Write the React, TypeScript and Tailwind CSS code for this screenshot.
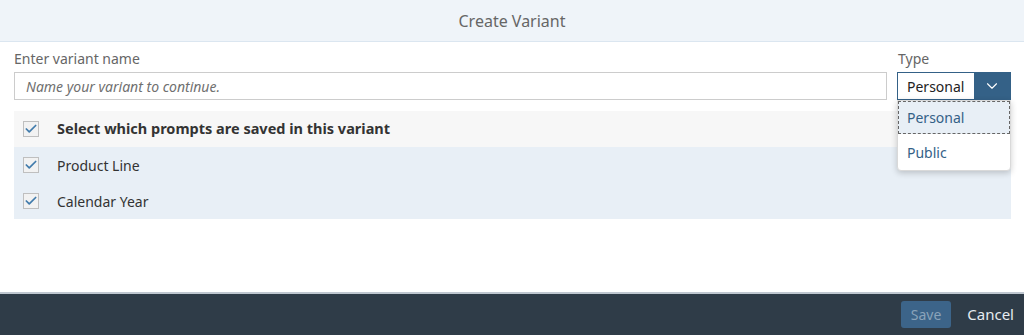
import { ChevronDown, Check } from "lucide-react";

function Box() {
  return (
    <span className="flex h-4 w-4 items-center justify-center border border-[#bfbfbf] bg-[#f2f2f2]">
      <Check size={14} strokeWidth={3} className="text-[#427cac]" />
    </span>
  );
}

function Row({ label, bold, head }: { label: string; bold?: boolean; head?: boolean }) {
  return (
    <div
      className={`flex h-9 items-center gap-[18px] pl-[9px] ${
        head ? "bg-[#f7f7f7]" : "bg-[#e8eff6]"
      }`}
    >
      <Box />
      <span className={`text-[#333] ${bold ? "text-[14.5px] font-bold" : "text-[14px]"}`}>{label}</span>
    </div>
  );
}

export default function App() {
  return (
    <div
      className="flex h-[335px] w-[1024px] flex-col overflow-hidden bg-white"
      style={{ fontFamily: '"Noto Sans", "Open Sans", sans-serif' }}
    >
      {/* Header */}
      <div className="flex h-[42px] shrink-0 items-center justify-center border-b border-[#dbe6f0] bg-[#eff4f9]">
        <span className="text-[16px] text-[#666]">Create Variant</span>
      </div>

      {/* Body */}
      <div className="flex-1 pl-[14px] pr-[13px] pt-[8px]">
        <div className="flex gap-[10px]">
          <div className="flex flex-1 flex-col">
            <label className="mb-[5px] text-[14px] leading-[17px] text-[#666]">Enter variant name</label>
            <div className="flex h-[28px] items-center border border-[#cccccc] px-[11px]">
              <span className="text-[14px] italic text-[#707070]">Name your variant to continue.</span>
            </div>
          </div>
          <div className="relative flex w-[114px] flex-col">
            <label className="mb-[5px] pl-px text-[14px] leading-[17px] text-[#666]">Type</label>
            <div className="flex h-[28px] border border-[#346187]">
              <span className="flex flex-1 items-center bg-white pl-[9px] text-[14px] text-[#222]">Personal</span>
              <span className="flex w-[36px] items-center justify-center bg-[#346187]">
                <ChevronDown size={18} strokeWidth={1.5} className="text-white" />
              </span>
            </div>
            <div className="absolute left-0 right-0 top-[50px] z-10 rounded-b-[4px] border border-[#d9d9d9] bg-white shadow-[0_2px_6px_rgba(0,0,0,0.2)]">
              <div className="flex h-[33px] items-center border border-dashed border-[#666] bg-[#e8eff6] pl-[8px] text-[14px] text-[#346187]">
                Personal
              </div>
              <div className="flex h-[36px] items-center pl-[9px] text-[14px] text-[#346187]">Public</div>
            </div>
          </div>
        </div>

        <div className="mt-[11px] flex flex-col">
          <Row label="Select which prompts are saved in this variant" bold head />
          <Row label="Product Line" />
          <Row label="Calendar Year" />
        </div>
      </div>

      {/* Footer */}
      <div className="flex h-[43px] shrink-0 items-center justify-end gap-[12px] border-t-2 border-[#bfc7d0] bg-[#2f3c48] pr-[6px]">
        <button className="h-[27px] rounded-[3px] bg-[#3c6489] px-[10px] text-[14px] text-[#8aa3ba]">Save</button>
        <button className="h-[27px] px-[4px] text-[15px] text-[#e6ebf0]">Cancel</button>
      </div>
    </div>
  );
}
